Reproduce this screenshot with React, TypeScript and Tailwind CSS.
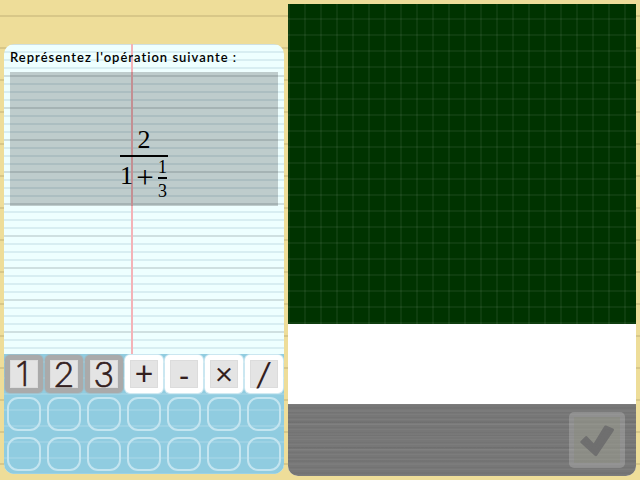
import React from "react";

const keys = [
  { label: "1", used: true, glyph: "font-['Open_Sans',sans-serif] font-light text-[34px] -translate-y-px [-webkit-text-stroke:0.6px_#33201e]" },
  { label: "2", used: true, glyph: "font-light text-[35px] -translate-y-px [-webkit-text-stroke:0.7px_#33201e]" },
  { label: "3", used: true, glyph: "font-light text-[35px] -translate-y-px [-webkit-text-stroke:0.7px_#33201e]" },
  { label: "+", used: false, glyph: "text-[32px] -translate-y-px" },
  { label: "-", used: false, glyph: "text-[30px] translate-y-px" },
  { label: "×", used: false, glyph: "text-[31px] -translate-y-px" },
  { label: "/", used: false, glyph: "text-[34px] -skew-x-3" },
];

function Key({ label, used, glyph }: { label: string; used: boolean; glyph: string }) {
  return (
    <div className="flex h-10 w-10 items-center justify-center">
      <div
        className={`flex h-[38px] w-[38px] items-center justify-center rounded-[5px] ${used ? "bg-[#aaaaaa] shadow-[0_0_0_1px_#aaaaaa66]" : "bg-white shadow-[0_0_0_1px_#ffffff88]"}`}
      >
        <div className="flex h-7 w-7 items-center justify-center border border-[#dcdcdc] bg-[#e4e4e4] text-[#33201e]">
          <span className={`block leading-none ${glyph}`}>{label}</span>
        </div>
      </div>
    </div>
  );
}

function Slot() {
  return (
    <div className="flex h-10 w-10 items-center justify-center">
      <div className="h-[34px] w-[34px] rounded-[11px] border-2 border-[#c4e5f0]" />
    </div>
  );
}

function Fraction() {
  return (
    <div className="flex w-12 flex-col font-['Liberation_Serif','Times_New_Roman',serif] text-black">
      <div className="h-[25px] text-center text-[26px] leading-[20px]">2</div>
      <div className="h-[2px] bg-black" />
      <div className="flex items-start">
        <div className="w-[13px] text-[26px] leading-[38px]">1</div>
        <div className="w-[24px] text-center text-[31px] leading-[41px]">+</div>
        <div className="flex w-[11px] flex-col items-center pt-px text-[18px]">
          <div className="h-[19px] leading-[18px]">1</div>
          <div className="h-[2px] w-[9px] bg-black" />
          <div className="h-6 leading-[25px]">3</div>
        </div>
      </div>
    </div>
  );
}

export default function App() {
  return (
    <div className="flex h-[480px] w-[640px] overflow-hidden bg-[#eedd99] bg-[repeating-linear-gradient(to_bottom,transparent_0_15px,#d8c788_15px_17px,transparent_17px_32px)] font-['Lato','Liberation_Sans',sans-serif]">
      <section className="ml-1 mt-11 flex h-[430px] w-[280px] flex-col overflow-hidden rounded-[10px] bg-[#eeffff] bg-[linear-gradient(to_right,transparent_127px,#f4b3b8_127px_129px,transparent_129px),repeating-linear-gradient(to_bottom,#cfe0e1_0_1px,transparent_1px_7px,#d8eef2_7px_9px,transparent_9px_15px,#d8eef2_15px_17px,transparent_17px_23px,#d8eef2_23px_25px,transparent_25px_31px,#cfe0e1_31px_32px)]">
        <h1 className="ml-[6px] h-7 whitespace-nowrap text-[13px] font-semibold leading-[27px] tracking-[1px] text-black">
          Représentez l'opération suivante :
        </h1>
        <div className="ml-[6px] flex h-[134px] w-[268px] justify-center bg-black/20 pt-[58px]">
          <Fraction />
        </div>
        <div className="mt-auto grid h-[120px] grid-cols-7 bg-[#90cce0] bg-[repeating-linear-gradient(to_bottom,transparent_0_7px,#9dd2e4_7px_9px,transparent_9px_16px)]">
          {keys.map((key) => (
            <Key key={key.label} {...key} />
          ))}
          {Array.from({ length: 14 }, (_, i) => (
            <Slot key={i} />
          ))}
        </div>
      </section>

      <section className="ml-1 mt-1 flex h-[472px] w-[348px] flex-col overflow-hidden rounded-b-[10px] bg-white">
        <div className="h-80 bg-[#003300] bg-[repeating-linear-gradient(to_right,#ffffff0e_0_2px,transparent_2px_16px),repeating-linear-gradient(to_bottom,transparent_0_14px,#ffffff0e_14px_16px)]" />
        <div className="h-20" />
        <div className="flex h-[72px] justify-end bg-[#777777] bg-[repeating-linear-gradient(to_bottom,#ffffff0a_0_1px,transparent_1px_3px,#00000008_3px_4px,transparent_4px_5px),repeating-linear-gradient(to_bottom,transparent_0_4px,#00000008_4px_6px,#ffffff08_6px_8px,transparent_8px_13px)] pr-[11px] pt-2">
          <button className="flex h-14 w-14 items-center justify-center rounded-[5px] border-[5px] border-[#ffffff30] bg-[#a0a19488] bg-clip-padding">
            <svg className="h-[46px] w-[46px]" viewBox="0 0 46 46">
              <path
                d="M7.8 25 L12.3 20.7 L20 28.7 L31.5 10 L38.5 12.8 L21.8 37.6 Z"
                fill="#6f6f6f"
                stroke="#6f6f6f"
                strokeWidth="3"
                strokeLinejoin="round"
              />
            </svg>
          </button>
        </div>
      </section>
    </div>
  );
}
